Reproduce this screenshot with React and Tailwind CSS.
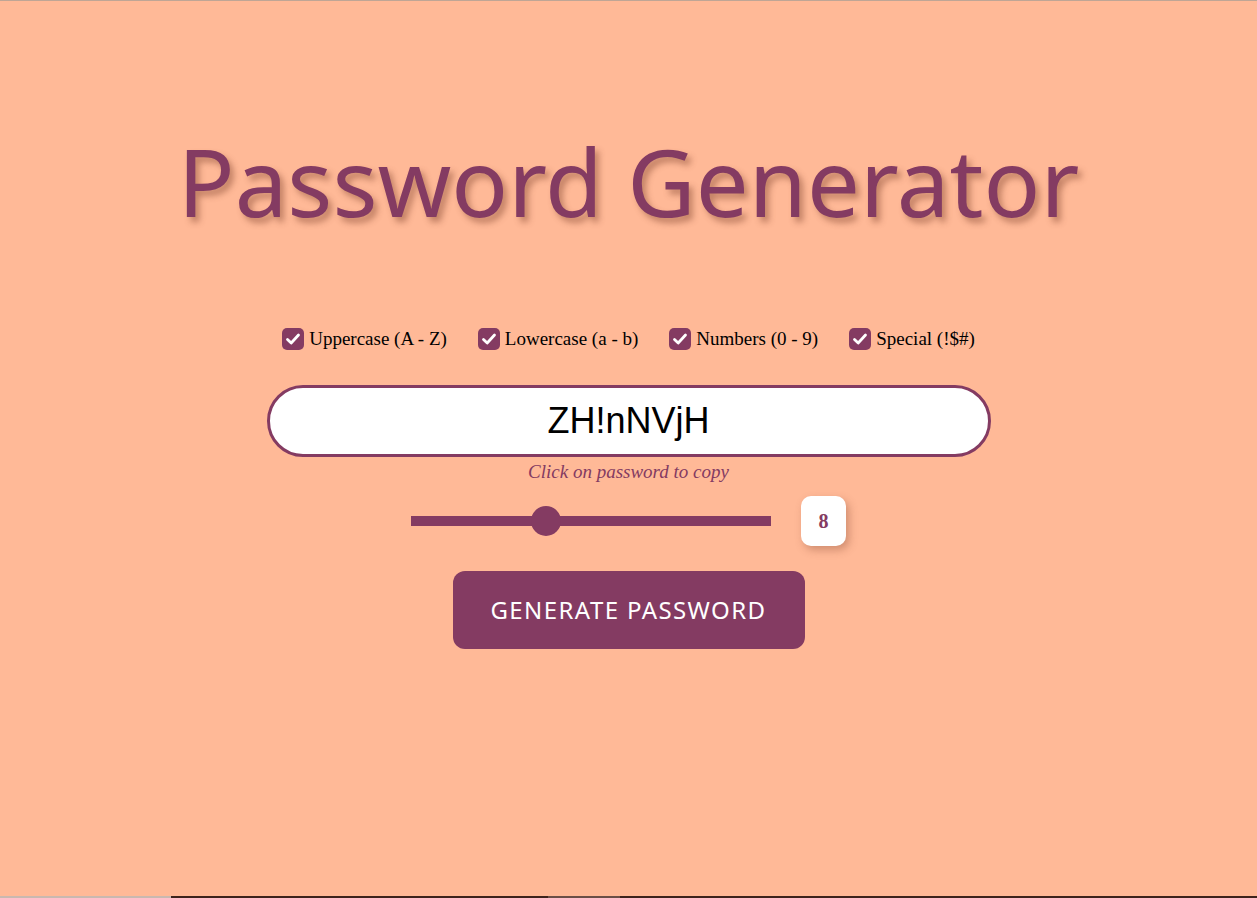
import React from "react";

function Check({ label }) {
  return (
    <label className="flex items-center gap-[5px]">
      <span className="flex h-[22px] w-[22px] items-center justify-center rounded-[5px] bg-[#843B62]">
        <svg width="16" height="16" viewBox="0 0 16 16" fill="none">
          <path d="M2.5 8.5 L6.2 12 L13.5 4" stroke="white" strokeWidth="2.8" strokeLinecap="round" strokeLinejoin="round" />
        </svg>
      </span>
      <span className="text-[19px] leading-[28px] text-black [font-family:'Liberation_Serif',serif]">{label}</span>
    </label>
  );
}

export default function App() {
  return (
    <div className="flex min-h-[898px] flex-col bg-[#FFB997]">
      <div className="h-px w-full bg-[#bfa595]" />
      <main className="flex flex-1 flex-col items-center">
        <h1 className="mt-[115px] text-[94px] leading-[130px] text-[#843B62] [font-family:'Comic_Sans_MS','Noto_Sans',sans-serif] [text-shadow:4px_5px_6px_rgba(120,60,40,0.45)]">
          Password Generator
        </h1>
        <div className="mt-[79px] flex items-center gap-[31px]">
          <Check label="Uppercase (A - Z)" />
          <Check label="Lowercase (a - b)" />
          <Check label="Numbers (0 - 9)" />
          <Check label="Special (!$#)" />
        </div>
        <div className="mt-[32px] flex h-[72px] w-[724px] items-center justify-center rounded-full border-[3px] border-[#843B62] bg-white text-[36px] text-black [font-family:'Liberation_Sans',Arial,sans-serif]">
          ZH!nNVjH
        </div>
        <p className="mt-[3px] text-[19px] italic leading-[24px] text-[#843B62] [font-family:'Liberation_Serif',serif]">
          Click on password to copy
        </p>
        <div className="mt-[12px] flex items-center gap-[30px]">
          <div className="relative h-[10px] w-[360px] bg-[#843B62]">
            <div className="absolute left-[120px] top-[-10px] h-[30px] w-[30px] rounded-full bg-[#843B62]" />
          </div>
          <div className="flex h-[50px] w-[45px] items-center justify-center rounded-[10px] bg-white text-[20px] font-bold text-[#843B62] shadow-[3px_4px_8px_rgba(120,60,40,0.35)] [font-family:'Liberation_Serif',serif]">
            8
          </div>
        </div>
        <button className="mt-[25px] flex h-[78px] w-[352px] items-center justify-center rounded-[12px] bg-[#843B62] text-[24px] tracking-[1.4px] text-white [font-family:'Comic_Sans_MS','Noto_Sans',sans-serif]">
          GENERATE PASSWORD
        </button>
      </main>
      <div className="flex h-[2px] w-full">
        <div className="w-[171px] bg-[#c9b8b0]" />
        <div className="w-[377px] bg-[#3d231c]" />
        <div className="w-[72px] bg-[#6b4e46]" />
        <div className="flex-1 bg-[#3d231c]" />
      </div>
    </div>
  );
}
